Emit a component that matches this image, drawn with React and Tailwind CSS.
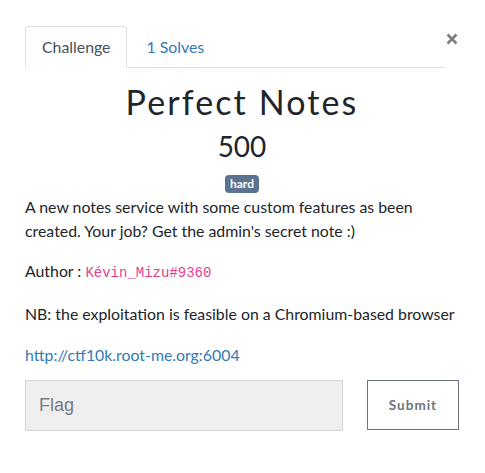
import React, {useState} from "react";

export default function App(){
  const [tab, setTab] = useState('challenge');
  const [flag, setFlag] = useState('');

  return (
    <div className="relative w-[485px] h-[473px] bg-white text-[#212529] font-['Lato','Noto_Sans',sans-serif]">
      <button className="absolute left-[444px] top-[29px] w-[16px] h-[20px] flex items-center justify-center text-[#7d7d7d]">
        <svg width="12" height="12" viewBox="0 0 12 12"><path d="M1.5 1.5 L10.5 10.5 M10.5 1.5 L1.5 10.5" stroke="currentColor" strokeWidth="2.6" strokeLinecap="butt"/></svg>
      </button>

      <div className="pt-[26px] pl-[25px] pr-[26px]">
        <ul className="flex border-b border-[#dee2e6] mr-[14px] text-[15.85px] leading-[24px]">
          <li className="-mb-px">
            <button onClick={()=>setTab('challenge')} className={"block px-4 py-2 border rounded-t-[4px] " + (tab==='challenge' ? "border-[#dee2e6] border-b-white bg-white text-[#495057]" : "border-transparent text-[#337ab7]")}>Challenge</button>
          </li>
          <li className="-mb-px">
            <button onClick={()=>setTab('solves')} className={"block px-[18px] py-2 border rounded-t-[4px] " + (tab==='solves' ? "border-[#dee2e6] border-b-white bg-white text-[#495057]" : "border-transparent text-[#337ab7]")}>1 Solves</button>
          </li>
        </ul>

        <div className="pt-[14px]">
          <h2 className="text-center text-[34px] leading-[40px] font-normal tracking-[2.1px] font-['Lato',sans-serif]">Perfect Notes</h2>
          <h3 className="text-center text-[28px] leading-[36px] mt-[6px]">500</h3>
          <div className="flex justify-center mt-[11px]">
            <span className="h-[18px] flex items-center bg-[#5b7290] text-white text-[12px] font-bold leading-[12px] px-[5px] rounded-[4px]">hard</span>
          </div>

          <div className="text-[15.85px] leading-[24px]">
            <p className="mt-[2px]">A new notes service with some custom features as been created. Your job? Get the admin's secret note :)</p>
            <p className="mt-[16px]">Author : <code className="text-[#e83e8c] text-[14px] font-['Liberation_Mono',monospace]">Kévin_Mizu#9360</code></p>
            <p className="mt-[17px]">NB: the exploitation is feasible on a Chromium-based browser</p>
            <p className="mt-[17px]"><a href="#" className="text-[#337ab7]">http://ctf10k.root-me.org:6004</a></p>
          </div>

          <div className="flex items-start mt-[13px]">
            <input value={flag} onChange={(e)=>setFlag(e.target.value)} placeholder="Flag" className="w-[318px] h-[51px] bg-[#efefef] border border-[#ced4da] px-[13px] text-[18px] font-['Liberation_Sans',sans-serif] text-[#495057] placeholder:text-[#757d85] outline-none" />
            <button className="ml-auto w-[92px] h-[50px] border border-[#6c757d] text-[#6c757d] text-[13.5px] font-bold tracking-[1px]">Submit</button>
          </div>
        </div>
      </div>
    </div>
  );
}
